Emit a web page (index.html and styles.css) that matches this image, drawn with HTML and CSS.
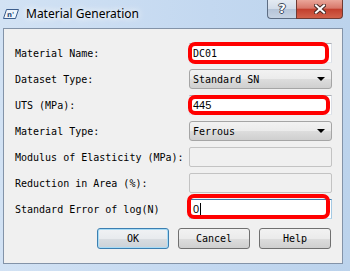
FILE: index.html
```html
<!DOCTYPE html>
<html lang="en">
<head>
  <meta charset="UTF-8">
  <title>Material Generation</title>
  <link rel="stylesheet" href="styles.css">
</head>
<body>
  <div class="window">
    <div class="titlebar">
      <svg class="app-icon" width="16" height="10" viewBox="0 0 16 10">
        <path d="M3.5 0.5 H15.5 L12.5 9.5 H0.5 Z" fill="#eef4fb" stroke="#3b5d8c"/>
        <text x="4" y="8" font-family="DejaVu Sans" font-size="7" font-weight="bold" fill="#2a4a7a">n'</text>
      </svg>
      <span class="title">Material Generation</span>
      <div class="caption-buttons">
        <div class="cap-help">?</div>
        <div class="cap-close">
          <svg width="12" height="10" viewBox="0 0 12 10">
            <path d="M2 1.5 L10 8.5 M10 1.5 L2 8.5" stroke="#4a2a26" stroke-width="4" stroke-linecap="square"/>
            <path d="M2 1.5 L10 8.5 M10 1.5 L2 8.5" stroke="#ffffff" stroke-width="2" stroke-linecap="square"/>
          </svg>
        </div>
      </div>
    </div>

    <div class="frame">
      <div class="client">
        <div class="form">
          <label class="label">Material Name:</label>
          <div class="field">
            <div class="edit">DC01</div>
            <div class="mark"></div>
          </div>

          <label class="label">Dataset Type:</label>
          <div class="combo">
            <span>Standard SN</span>
            <span class="arrow"></span>
          </div>

          <label class="label">UTS (MPa):</label>
          <div class="field">
            <div class="edit sans">445</div>
            <div class="mark mark-low"></div>
          </div>

          <label class="label">Material Type:</label>
          <div class="combo">
            <span>Ferrous</span>
            <span class="arrow"></span>
          </div>

          <label class="label">Modulus of Elasticity (MPa):</label>
          <div class="edit disabled"></div>

          <label class="label">Reduction in Area (%):</label>
          <div class="edit disabled"></div>

          <label class="label">Standard Error of log(N)</label>
          <div class="field">
            <div class="edit sans focused">0<span class="caret"></span></div>
            <div class="mark mark-tall"></div>
          </div>
        </div>

        <div class="buttons">
          <button class="default">OK</button>
          <button>Cancel</button>
          <button>Help</button>
        </div>
      </div>
    </div>
  </div>
</body>
</html>
```

FILE: styles.css
```css
body {
  margin: 0;
  background-color: #c4d8ef;
  font-family: "DejaVu Sans Mono", monospace;
  font-size: 10px;
  color: #000;
}

.window {
  width: 350px;
  height: 271px;
  display: flex;
  flex-direction: column;
  background: linear-gradient(90deg, #d2e2f4, #c3d8f0 60%, #bcd3ec);
}

/* title bar */
.titlebar {
  height: 28px;
  display: flex;
  align-items: flex-start;
  padding: 0 7px 0 3px;
}

.app-icon {
  margin-top: 9px;
}

.title {
  margin: 6px 0 0 7px;
  font-family: "Noto Sans", sans-serif;
  font-size: 12px;
  line-height: 16px;
  text-shadow: 0 0 6px #ffffff, 0 0 10px #ffffff;
}

.caption-buttons {
  margin-left: auto;
  display: flex;
}

.cap-help {
  width: 28px;
  height: 18px;
  border: 1px solid #5d6d83;
  border-top: none;
  border-right: none;
  border-radius: 0 0 0 4px;
  background: linear-gradient(#e4eaf2, #d2dce9 50%, #b5c4d8 51%, #c6d3e3);
  color: #fff;
  font-family: "DejaVu Sans", sans-serif;
  font-weight: bold;
  font-size: 13px;
  line-height: 18px;
  text-align: center;
  text-shadow: 1px 0 0 #3d4a5c, -1px 0 0 #3d4a5c, 0 1px 0 #3d4a5c, 0 -1px 0 #3d4a5c;
}

.cap-close {
  width: 45px;
  height: 18px;
  border: 1px solid #6f3a33;
  border-top: none;
  border-radius: 0 0 4px 0;
  background: linear-gradient(#eaa699, #d8786a 45%, #c3402e 52%, #d2624b);
  display: flex;
  align-items: center;
  justify-content: center;
}

/* window frame + client area */
.frame {
  flex: 1;
  display: flex;
  padding: 0 7px 7px 3px;
}

.client {
  flex: 1;
  display: flex;
  flex-direction: column;
  background-color: #f0f0f0;
  border: 1px solid #8393a8;
  padding: 14px 10px 0 11px;
}

.form {
  display: grid;
  grid-template-columns: 174px 143px;
  grid-auto-rows: 20px;
  row-gap: 6px;
}

.label {
  display: flex;
  align-items: center;
  white-space: nowrap;
}

.field {
  position: relative;
}

.edit {
  height: 20px;
  box-sizing: border-box;
  background-color: #fff;
  border: 1px solid #abadb3;
  border-color: #abadb3 #dbdfe6 #e3e9ef #e2e3ea;
  padding-left: 3px;
  display: flex;
  align-items: center;
}

.edit.sans {
  font-family: "Liberation Sans", sans-serif;
  font-size: 11px;
}

.edit.focused {
  border-color: #3d7bad #a4c9e3 #b7d9ed #b5cfe7;
}

.edit.disabled {
  background-color: #f0f0f0;
  border: 1px solid #c3c3c3;
  border-radius: 2px;
}

.caret {
  display: inline-block;
  width: 1px;
  height: 13px;
  background-color: #000;
  margin-left: 1px;
}

/* red annotation drawn over some fields */
.mark {
  position: absolute;
  left: -1px;
  top: -1px;
  width: 141px;
  height: 22px;
  box-sizing: border-box;
  border: 4px solid #ff0000;
  border-radius: 7px;
}

.mark.mark-low {
  top: 0;
  width: 142px;
  height: 20px;
}

.mark.mark-tall {
  left: -2px;
  top: -5px;
  width: 143px;
  height: 25px;
}

.combo {
  box-sizing: border-box;
  height: 20px;
  border: 1px solid #a5a5a5;
  border-radius: 3px;
  background: linear-gradient(#f2f2f2, #ebebeb 50%, #dddddd 51%, #cfcfcf);
  padding: 0 6px 0 3px;
  display: flex;
  align-items: center;
  justify-content: space-between;
}

.arrow {
  width: 0;
  height: 0;
  border-left: 4px solid transparent;
  border-right: 4px solid transparent;
  border-top: 4px solid #000;
}

/* bottom buttons */
.buttons {
  display: flex;
  justify-content: flex-end;
  gap: 9px;
  margin-top: 9px;
  padding-right: 1px;
}

button {
  width: 72px;
  height: 21px;
  border: 1px solid #707070;
  border-radius: 3px;
  background: linear-gradient(#f2f2f2, #ebebeb 50%, #dddddd 51%, #cfcfcf);
  font-family: "DejaVu Sans Mono", monospace;
  font-size: 10px;
  color: #000;
  padding: 0;
}

button.default {
  border-color: #3c7fb1;
  box-shadow: inset 0 0 0 1px #a8dcf6;
  background: linear-gradient(#f0f2f4, #e8ebee 50%, #d9dde1 51%, #ccd2d8);
}
```
